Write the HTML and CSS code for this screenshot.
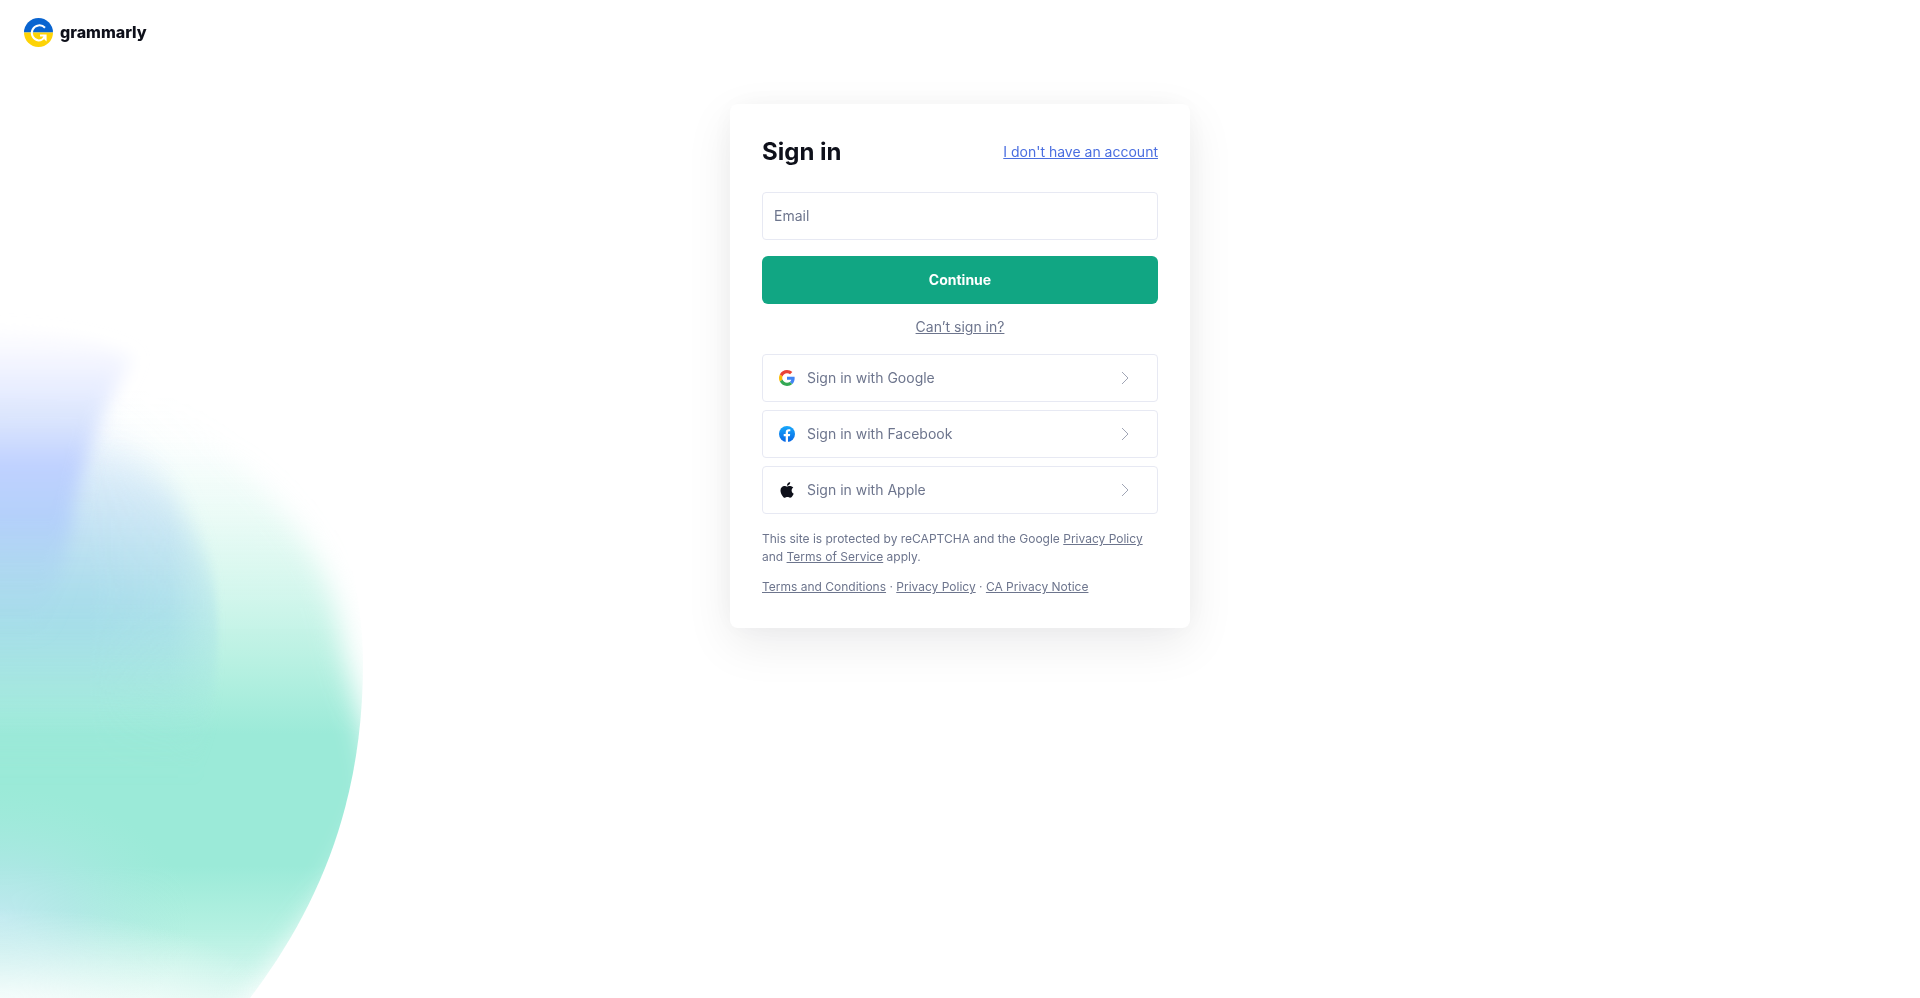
FILE: index.html
```
<!DOCTYPE html>
<html lang="en">
<head>
    <meta charset="UTF-8">
    <meta name="viewport" content="width=device-width, initial-scale=1.0">
    <title>Sign in | Grammarly</title>
    <link rel="stylesheet" href="styles.css">
</head>
<body>
    <!-- background blob, bottom left -->
    <svg class="blob" width="400" height="700" viewBox="0 0 400 700" aria-hidden="true">
        <defs>
            <linearGradient id="green" gradientUnits="userSpaceOnUse" x1="0" y1="90" x2="0" y2="720">
                <stop offset="0" stop-color="#9beadb" stop-opacity="0"/>
                <stop offset=".08" stop-color="#9beadb" stop-opacity=".03"/>
                <stop offset=".2" stop-color="#9cecd4" stop-opacity=".2"/>
                <stop offset=".33" stop-color="#9cecd6" stop-opacity=".45"/>
                <stop offset=".42" stop-color="#9cebd6" stop-opacity=".68"/>
                <stop offset=".55" stop-color="#9bead8" stop-opacity="1"/>
                <stop offset=".76" stop-color="#9bead8" stop-opacity="1"/>
                <stop offset=".86" stop-color="#9cecd8" stop-opacity=".75"/>
                <stop offset="1" stop-color="#9cebd8" stop-opacity=".25"/>
            </linearGradient>
            <linearGradient id="teal" gradientUnits="userSpaceOnUse" x1="0" y1="120" x2="0" y2="450">
                <stop offset="0" stop-color="#e4ecff" stop-opacity=".4"/>
                <stop offset=".25" stop-color="#c8e2f6" stop-opacity=".85"/>
                <stop offset=".58" stop-color="#a5dbea"/>
                <stop offset=".75" stop-color="#a0dfe4" stop-opacity=".8"/>
                <stop offset="1" stop-color="#9bead8" stop-opacity="0"/>
            </linearGradient>
            <linearGradient id="blue" gradientUnits="userSpaceOnUse" x1="0" y1="32" x2="0" y2="340">
                <stop offset="0" stop-color="#f1f1ff" stop-opacity=".1"/>
                <stop offset=".15" stop-color="#ebefff" stop-opacity=".9"/>
                <stop offset=".3" stop-color="#d9e4fd"/>
                <stop offset=".44" stop-color="#bfd1ff"/>
                <stop offset=".62" stop-color="#b3d0fa"/>
                <stop offset=".8" stop-color="#abd6f0" stop-opacity=".7"/>
                <stop offset="1" stop-color="#a5dcea" stop-opacity="0"/>
            </linearGradient>
            <linearGradient id="side" gradientUnits="userSpaceOnUse" x1="90" y1="0" x2="220" y2="0">
                <stop offset="0" stop-color="#fff"/>
                <stop offset=".6" stop-color="#fff" stop-opacity=".85"/>
                <stop offset="1" stop-color="#fff" stop-opacity=".35"/>
            </linearGradient>
            <radialGradient id="base" gradientUnits="userSpaceOnUse" cx="0" cy="0" r="1" gradientTransform="translate(0 730) scale(300 120)">
                <stop offset="0" stop-color="#fff"/>
                <stop offset=".3" stop-color="#fff" stop-opacity=".75"/>
                <stop offset="1" stop-color="#fff" stop-opacity="0"/>
            </radialGradient>
            <radialGradient id="haze" gradientUnits="userSpaceOnUse" cx="0" cy="0" r="1" gradientTransform="translate(0 620) scale(190 130)">
                <stop offset="0" stop-color="#c0e9f0" stop-opacity=".95"/>
                <stop offset=".4" stop-color="#b4e6e9" stop-opacity=".65"/>
                <stop offset="1" stop-color="#a8eade" stop-opacity="0"/>
            </radialGradient>
            <filter id="soft" x="-20%" y="-20%" width="140%" height="140%"><feGaussianBlur stdDeviation="9 8"/></filter>
            <filter id="tall" x="-20%" y="-20%" width="140%" height="140%"><feGaussianBlur stdDeviation="3 22"/></filter>
            <filter id="softer" x="-20%" y="-20%" width="140%" height="140%"><feGaussianBlur stdDeviation="14"/></filter>
            <clipPath id="edge"><path d="M0 0H200C300 100 363 240 363 365C363 500 322 605 250 700H0Z"/></clipPath>
            <mask id="fade" maskUnits="userSpaceOnUse" x="0" y="0" width="400" height="700">
                <path d="M-50 60H90C220 130 316 220 338 320C346 380 372 440 376 490C362 560 290 650 226 730H-50Z" fill="#fff" filter="url(#softer)"/>
            </mask>
            <mask id="sidefade" maskUnits="userSpaceOnUse" x="0" y="0" width="400" height="700">
                <rect width="400" height="700" fill="url(#side)"/>
            </mask>
        </defs>
        <g clip-path="url(#edge)">
            <rect width="400" height="700" fill="url(#green)" mask="url(#fade)"/>
            <g mask="url(#sidefade)">
                <path d="M-30 130L90 134C170 170 219 250 219 330C219 390 204 430 190 470H-30Z" fill="url(#teal)" filter="url(#tall)"/>
            </g>
            <rect y="480" width="200" height="220" fill="url(#haze)"/>
            <rect y="580" width="320" height="120" fill="url(#base)"/>
        </g>
        <path d="M-30 28C50 32 100 40 132 60C104 108 84 160 74 210C68 260 56 300 40 340H-30Z" fill="url(#blue)" filter="url(#soft)"/>
    </svg>

    <header class="header">
        <a class="logo" href="#">
            <svg width="29" height="29" viewBox="0 0 29 29" aria-hidden="true">
                <path d="M0 14.500a14.500 14.500 0 0 1 29 0z" fill="#0964d0"/>
                <path d="M0 14.500a14.500 14.500 0 0 0 29 0z" fill="#fdd306"/>
                <path d="M21 9.800A7.600 7.600 0 1 0 14.500 22.500C17.200 22.500 19.400 21 20.600 18.400" fill="none" stroke="#fff" stroke-width="2"/>
                <path d="M16 16.400H22.600V23.600L20.400 21.600L19.600 18.400H16Z" fill="#fff"/>
            </svg>
            <span class="logo-text">grammarly</span>
        </a>
    </header>

    <main class="main">
        <form class="card">
            <div class="card-top">
                <h1>Sign in</h1>
                <a class="signup" href="#">I don't have an account</a>
            </div>

            <input class="email" type="email" aria-label="Email" placeholder="Email">
            <button class="continue" type="submit">Continue</button>
            <a class="help" href="#">Can’t sign in?</a>

            <div class="social">
                <button class="social-btn" type="button">
                    <svg width="16" height="16" viewBox="0 0 48 48" aria-hidden="true">
                        <path fill="#EA4335" d="M24 9.500c3.540 0 6.710 1.220 9.210 3.600l6.850-6.850C35.900 2.380 30.470 0 24 0 14.620 0 6.510 5.380 2.560 13.220l7.980 6.190C12.430 13.720 17.740 9.500 24 9.500z"/>
                        <path fill="#4285F4" d="M46.980 24.550c0-1.570-.15-3.090-.38-4.550H24v9.020h12.940c-.58 2.960-2.260 5.480-4.780 7.180l7.730 6c4.510-4.180 7.090-10.360 7.090-17.650z"/>
                        <path fill="#FBBC05" d="M10.530 28.590c-.48-1.450-.76-2.990-.76-4.590s.27-3.140.76-4.590l-7.980-6.190C.92 16.460 0 20.120 0 24c0 3.880.92 7.540 2.560 10.780l7.970-6.190z"/>
                        <path fill="#34A853" d="M24 48c6.480 0 11.930-2.130 15.890-5.810l-7.730-6c-2.150 1.450-4.920 2.300-8.160 2.300-6.260 0-11.570-4.220-13.470-9.910l-7.980 6.190C6.510 42.620 14.620 48 24 48z"/>
                    </svg>
                    <span>Sign in with Google</span>
                    <svg class="arrow" width="8" height="14" viewBox="0 0 8 14" aria-hidden="true"><path d="M1 1l6 6-6 6"/></svg>
                </button>
                <button class="social-btn" type="button">
                    <svg width="16" height="16" viewBox="0 0 16 16" aria-hidden="true">
                        <defs><linearGradient id="fb" x1="0" y1="0" x2="0" y2="1"><stop offset="0" stop-color="#18a8fb"/><stop offset="1" stop-color="#0866e4"/></linearGradient></defs>
                        <circle cx="8" cy="8" r="8" fill="url(#fb)"/>
                        <path fill="#fff" d="M6.700 16v-5.700H4.700V8h2V6.300c0-2 1.200-3.100 3-3.100.9 0 1.600.1 1.600.1v2h-1c-1 0-1.300.6-1.300 1.200V8h2.200l-.4 2.300H9V16z"/>
                    </svg>
                    <span>Sign in with Facebook</span>
                    <svg class="arrow" width="8" height="14" viewBox="0 0 8 14" aria-hidden="true"><path d="M1 1l6 6-6 6"/></svg>
                </button>
                <button class="social-btn" type="button">
                    <svg width="16" height="16" viewBox="0 0 16 16" aria-hidden="true">
                        <path fill="#0e101a" d="M11.200 0c.1 1-.3 1.900-.8 2.600-.6.700-1.500 1.200-2.400 1.100-.1-.9.300-1.900.9-2.500C9.400.6 10.400.1 11.200 0zM14.300 5.500c-.1.100-1.700 1-1.700 2.900 0 2.300 2 3.100 2.100 3.100 0 .1-.3 1.100-1.100 2.200-.7 1-1.400 2-2.500 2s-1.400-.6-2.600-.6c-1.300 0-1.700.7-2.700.7s-1.700-.9-2.500-2.100C2.300 12.300 1.500 10.300 1.500 8.500c0-3 2-4.600 3.900-4.600 1 0 1.900.7 2.500.7s1.600-.7 2.800-.7c.5 0 2.300 0 3.600 1.600z"/>
                    </svg>
                    <span>Sign in with Apple</span>
                    <svg class="arrow" width="8" height="14" viewBox="0 0 8 14" aria-hidden="true"><path d="M1 1l6 6-6 6"/></svg>
                </button>
            </div>

            <p class="legal">This site is protected by reCAPTCHA and the Google <a href="#">Privacy Policy</a> and <a href="#">Terms of Service</a> apply.</p>
            <p class="legal"><a href="#">Terms and Conditions</a> · <a href="#">Privacy Policy</a> · <a href="#">CA Privacy Notice</a></p>
        </form>
    </main>
</body>
</html>
```
FILE: styles.css
```
* {
    box-sizing: border-box;
}
body {
    margin: 0;
    min-height: 100vh;
    background: #fff;
    color: #6d758d;
    font-family: Inter, "Liberation Sans", sans-serif;
    font-size: 14px;
    line-height: 20px;
}
a {
    color: inherit;
}
button, input {
    font: inherit;
}
.blob {
    position: fixed;
    left: 0;
    bottom: 0;
    z-index: -1;
}

/* header */
.header {
    display: flex;
    align-items: center;
    height: 64px;
    padding: 0 24px;
}
.logo {
    display: flex;
    align-items: center;
    gap: 7px;
    text-decoration: none;
}
.logo-text {
    color: #0e101a;
    font-size: 16px;
    font-weight: 800;
}

/* card */
.main {
    padding: 40px 16px;
}
.card {
    display: flex;
    flex-direction: column;
    max-width: 460px;
    margin: 0 auto;
    padding: 32px;
    background: #fff;
    border-radius: 8px;
    box-shadow: 0 16px 48px rgba(14, 16, 26, 0.08), 0 0 32px rgba(14, 16, 26, 0.04);
}
.card-top {
    display: flex;
    align-items: center;
    justify-content: space-between;
    margin-bottom: 24px;
}
h1 {
    margin: 0;
    color: #0e101a;
    font-size: 24px;
    line-height: 32px;
}
.signup {
    color: #4a6ee0;
}
.email {
    width: 100%;
    height: 48px;
    margin-bottom: 16px;
    padding: 0 11px 2px;
    border: 1px solid #e7e9f3;
    border-radius: 4px;
    background: #fff;
    color: #0e101a;
}
.email::placeholder {
    color: #6d758d;
}
.continue {
    height: 48px;
    border: 0;
    border-radius: 6px;
    background: #11a683;
    color: #fff;
    font-weight: 700;
    cursor: pointer;
}
.help {
    align-self: center;
    margin: 13px 0 17px;
}
.social {
    display: grid;
    gap: 8px;
    margin-bottom: 16px;
}
.social-btn {
    display: flex;
    align-items: center;
    gap: 12px;
    height: 48px;
    padding: 0 28px 0 16px;
    border: 1px solid #e7e9f3;
    border-radius: 4px;
    background: #fff;
    color: #6d758d;
    cursor: pointer;
}
.arrow {
    margin-left: auto;
    fill: none;
    stroke: #a0a5b5;
}
.legal {
    margin: 0 0 12px;
    font-size: 12px;
    line-height: 18px;
}
.legal:last-child {
    margin-bottom: 0;
}
```
